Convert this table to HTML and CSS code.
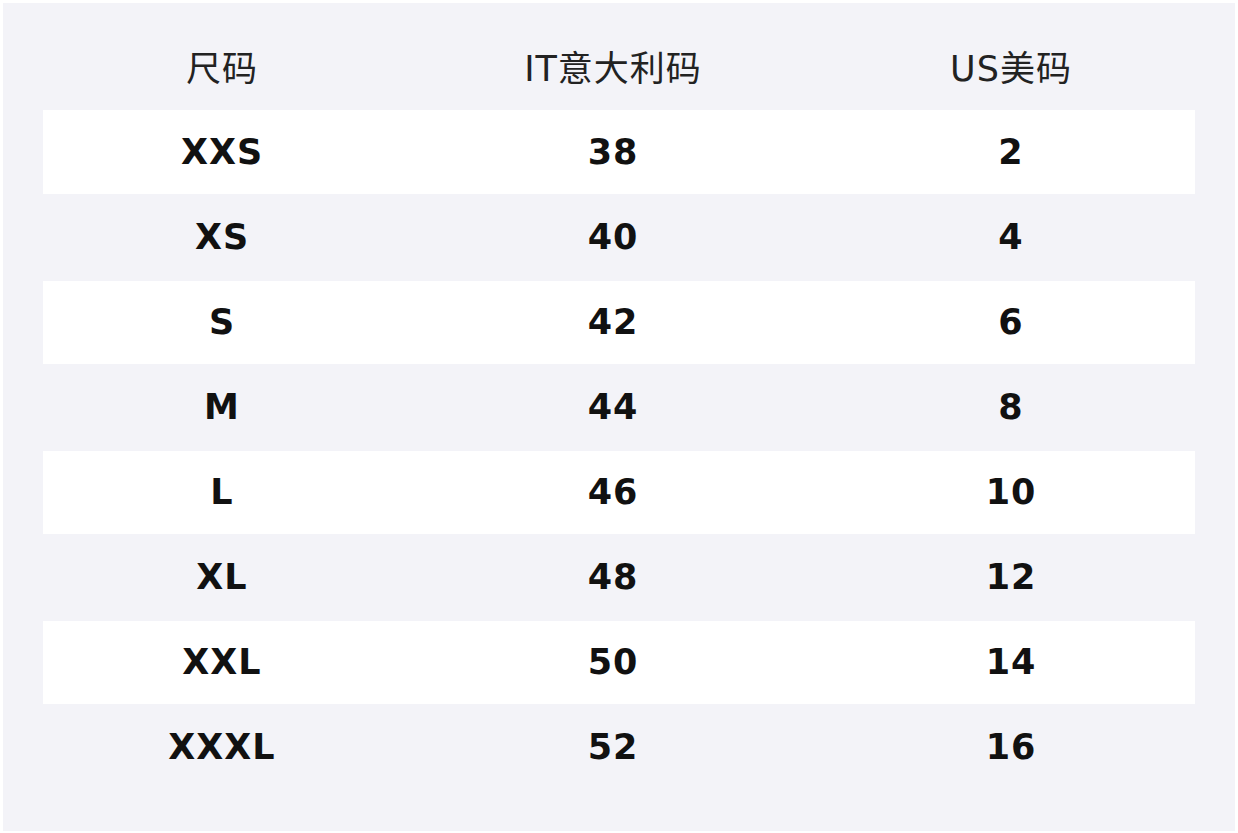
FILE: index.html
```html
<!DOCTYPE html>
<html lang="zh">
<head>
<meta charset="utf-8">
<title>尺码表</title>
<link rel="stylesheet" href="styles.css">
</head>
<body>
<div class="frame">
  <div class="panel">
    <table class="size-table">
      <colgroup>
        <col class="c1"><col class="c2"><col class="c3">
      </colgroup>
      <thead>
        <tr><th>尺码</th><th>IT意大利码</th><th>US美码</th></tr>
      </thead>
      <tbody>
        <tr class="odd"><td>XXS</td><td>38</td><td>2</td></tr>
        <tr><td>XS</td><td>40</td><td>4</td></tr>
        <tr class="odd"><td>S</td><td>42</td><td>6</td></tr>
        <tr><td>M</td><td>44</td><td>8</td></tr>
        <tr class="odd"><td>L</td><td>46</td><td>10</td></tr>
        <tr><td>XL</td><td>48</td><td>12</td></tr>
        <tr class="odd"><td>XXL</td><td>50</td><td>14</td></tr>
        <tr><td>XXXL</td><td>52</td><td>16</td></tr>
      </tbody>
    </table>
  </div>
</div>
</body>
</html>
```

FILE: styles.css
```css
html, body {
  margin: 0;
  padding: 0;
  background: #ffffff;
}
.frame {
  padding: 3px;
  width: 1238px;
  box-sizing: border-box;
}
.panel {
  background: #f3f3f8;
  padding: 22px 38px 40px 40px;
}
.size-table {
  width: 1152px;
  border-collapse: collapse;
  table-layout: fixed;
  font-family: "DejaVu Sans", "Noto Sans CJK SC", sans-serif;
}
.c1 { width: 356px; }
.c2 { width: 426px; }
.c3 { width: 370px; }
.size-table th,
.size-table td {
  height: 85px;
  padding: 0 0 0 2px;
  text-align: center;
  vertical-align: middle;
  box-sizing: border-box;
  letter-spacing: 1px;
}
.size-table th {
  font-size: 35px;
  font-weight: normal;
  color: #222222;
  padding-bottom: 4px;
}
.size-table td {
  font-size: 35px;
  font-weight: bold;
  color: #111111;
  border-bottom: 2px solid #f3f3f8;
  padding-bottom: 1px;
}
.size-table tr.odd td {
  background: #ffffff;
}
```
